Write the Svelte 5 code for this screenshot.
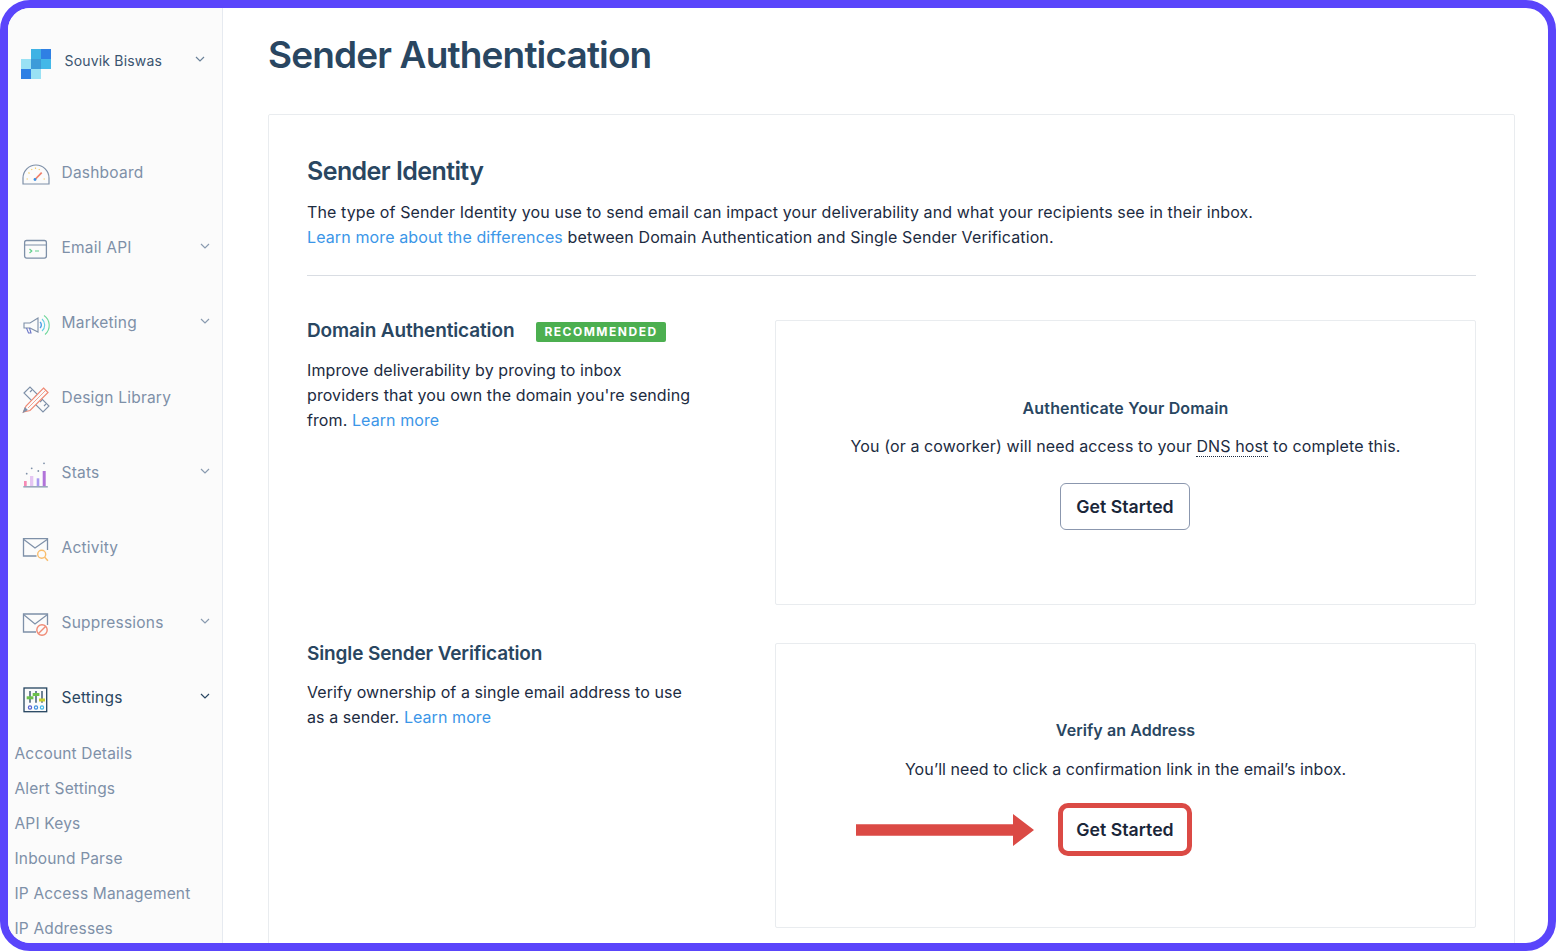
<script>
  const nav = [
    { id: 'dash', label: 'Dashboard' },
    { id: 'api', label: 'Email API', caret: true },
    { id: 'mkt', label: 'Marketing', caret: true },
    { id: 'lib', label: 'Design Library' },
    { id: 'stats', label: 'Stats', caret: true },
    { id: 'act', label: 'Activity' },
    { id: 'sup', label: 'Suppressions', caret: true },
    { id: 'set', label: 'Settings', caret: true, active: true }
  ];
  const subs = ['Account Details', 'Alert Settings', 'API Keys', 'Inbound Parse', 'IP Access Management', 'IP Addresses'];
</script>

<div class="frame">
  <aside class="sidebar">
    <div class="account">
      <svg class="logo" width="30" height="30" viewBox="0 0 30 30">
        <rect x="10" y="0" width="10" height="10" fill="#3fb2e4"/>
        <rect x="20" y="0" width="10" height="10" fill="#2f80e4"/>
        <rect x="0" y="10" width="10" height="10" fill="#99e1f4"/>
        <rect x="10" y="10" width="10" height="10" fill="#3d9bd9"/>
        <rect x="20" y="10" width="10" height="10" fill="#44b8e8"/>
        <rect x="0" y="20" width="10" height="10" fill="#2f80e4"/>
        <rect x="10" y="20" width="10" height="10" fill="#99e1f4"/>
      </svg>
      <span class="account-name">Souvik Biswas</span>
      <svg class="caret account-caret" width="10" height="6" viewBox="0 0 10 6"><path d="M1 1l4 4 4-4" fill="none" stroke="#6b8299" stroke-width="1.2"/></svg>
    </div>

    <nav class="nav">
      {#each nav as item}
        <div class="nav-item" class:active={item.active}>
          <svg class="nav-icon" width="28" height="28" viewBox="0 0 28 28" fill="none" stroke="#7e90a8" stroke-width="1.1">
            {#if item.id === 'dash'}
              <path d="M1 25v-6a13 13 0 0 1 26 0v6z" stroke-width="1.2"/>
              <path d="M13.500 20l6.200-6.300" stroke="#ef7f6a" stroke-width="1.700"/>
              <circle cx="13" cy="20.500" r="1.400" fill="#3f8fe0" stroke="none"/>
              <path d="M4.500 20h1.500M21.500 20H23M6.500 13.500l1 1M9.500 10l.5 1M13.500 8.500V10M17.500 10l-.5 1" stroke="#f5cf6c" stroke-width="1.200"/>
            {:else if item.id === 'api'}
              <rect x="2.600" y="6.500" width="21.800" height="17.600" rx="2" stroke-width="1.300"/>
              <path d="M2.600 11h21.800" stroke-width="1.200"/>
              <path d="M7.500 15l2.300 2-2.300 2" stroke="#62cf8c" stroke-width="1.200"/>
              <path d="M13 17h4" stroke="#62cf8c" stroke-width="1.200"/>
            {:else if item.id === 'mkt'}
              <g transform="translate(0 2)">
                <path d="M2 12h6l8-5v14l-8-4H2z"/>
                <path d="M4.500 17l2 5H9l-1.500-5" stroke="#6c76c8"/>
                <path d="M18 11a4 4 0 0 1 0 6" stroke="#4d9fe8" stroke-width="1.400"/>
                <path d="M20 8a8 8 0 0 1 0 12" stroke="#62cfe0"/>
                <path d="M22 4.500a12 12 0 0 1 1 19" stroke="#6fd79b"/>
              </g>
            {:else if item.id === 'lib'}
              <path d="M2 9l6-6 19 19-6 6z"/>
              <path d="M8 8l2-2M13 13l2-2M18 18l2-2M22 22l2-2"/>
              <path d="M21.500 4l4.500 4.500L8 26.500 1.500 28 4 22z" fill="#fbfbfb" stroke="#ef8a75" stroke-width="1.200"/>
              <path d="M23.800 6.200L6 24" stroke="#ef8a75" stroke-width=".8"/>
              <path d="M1.500 28L3 24l2 2z" fill="#7e90a8" stroke="#7e90a8"/>
            {:else if item.id === 'stats'}
              <rect x="1.300" y="27" width="24.500" height="1.600" fill="#9aa8bb" stroke="none"/>
              <rect x="2" y="22" width="2.700" height="5" fill="#f78ab5" stroke="none"/>
              <rect x="8" y="17" width="3.300" height="10" fill="#e5c5f2" stroke="none"/>
              <rect x="14.700" y="19.300" width="2.600" height="7.700" fill="#a99af0" stroke="none"/>
              <rect x="20.700" y="12" width="3" height="15" fill="#b173d9" stroke="none"/>
              <g fill="#7e90a8" stroke="none">
                <circle cx="4.700" cy="14.700" r=".9"/><circle cx="9.700" cy="9.300" r=".9"/><circle cx="16.300" cy="12" r=".9"/><circle cx="22" cy="4.300" r=".9"/>
              </g>
            {:else if item.id === 'act'}
              <path d="M14.500 22H1.500V4.700h24V16" stroke-width="1.300"/>
              <path d="M1.500 5.200L13 14 25.500 5.200" stroke-width="1.200"/>
              <circle cx="19.700" cy="20.300" r="4" stroke="#f9bd6c" stroke-width="1.400"/>
              <path d="M22.700 23.300l3.200 3.500" stroke="#f9bd6c" stroke-width="1.500"/>
            {:else if item.id === 'sup'}
              <path d="M14 23H1.500V5h24v11" stroke-width="1.300"/>
              <path d="M1.500 5.500L13 15 25.500 5.500" stroke-width="1.200"/>
              <circle cx="20" cy="21" r="5.200" fill="#fbfbfb" stroke="#ef8a75" stroke-width="1.400"/>
              <path d="M16.500 24.500l7-7" stroke="#ef8a75" stroke-width="1.400"/>
            {:else}
              <rect x="2" y="4" width="22.700" height="23.700" stroke="#24445f" stroke-width="1.300"/>
              <path d="M8 7v11.700M14 7v11.700M20 7v11.700" stroke="#24445f" stroke-width="1.300"/>
              <rect x="4.700" y="12.300" width="6.700" height="3" fill="#6cc04a" stroke="none"/>
              <rect x="10.700" y="9" width="6.700" height="3" fill="#6cc04a" stroke="none"/>
              <rect x="17" y="14.500" width="6" height="3" fill="#c5d12e" stroke="none"/>
              <circle cx="8" cy="23.500" r="1.600" stroke="#5560d0" stroke-width="1.200"/>
              <circle cx="14" cy="23.500" r="1.600" stroke="#3f8fe0" stroke-width="1.200"/>
              <circle cx="20" cy="23.500" r="1.600" stroke="#41b8e8" stroke-width="1.200"/>
            {/if}
          </svg>
          <span class="nav-label">{item.label}</span>
          {#if item.caret}
            <svg class="caret" width="10" height="6" viewBox="0 0 10 6"><path d="M1 1l4 4 4-4" fill="none" stroke={item.active ? '#294661' : '#8a9bb0'} stroke-width="1.2"/></svg>
          {/if}
        </div>
      {/each}
    </nav>

    <ul class="subs">
      {#each subs as s}<li>{s}</li>{/each}
    </ul>
  </aside>

  <main class="main">
    <h1>Sender Authentication</h1>
    <section class="card">
      <h2>Sender Identity</h2>
      <p class="intro">The type of Sender Identity you use to send email can impact your deliverability and what your recipients see in their inbox.<br><a href="#a">Learn more about the differences</a> between Domain Authentication and Single Sender Verification.</p>
      <hr />

      <div class="row">
        <div class="info">
          <h3>Domain Authentication <span class="badge">RECOMMENDED</span></h3>
          <p>Improve deliverability by proving to inbox providers that you own the domain you're sending from. <a href="#a">Learn more</a></p>
        </div>
        <div class="box">
          <h4>Authenticate Your Domain</h4>
          <p>You (or a coworker) will need access to your <span class="dotted">DNS host</span> to complete this.</p>
          <button class="btn">Get Started</button>
        </div>
      </div>

      <div class="row second">
        <div class="info narrow">
          <h3>Single Sender Verification</h3>
          <p>Verify ownership of a single email address to use as a sender. <a href="#a">Learn more</a></p>
        </div>
        <div class="box verify">
          <h4>Verify an Address</h4>
          <p>You’ll need to click a confirmation link in the email’s inbox.</p>
          <div class="callout">
            <svg class="arrow" width="178" height="32" viewBox="0 0 178 32"><path d="M0 10.200h157V0l21 16-21 16V21.800H0z" fill="#db4a45"/></svg>
            <button class="btn flagged">Get Started</button>
          </div>
        </div>
      </div>
    </section>
  </main>
</div>

<style>
  :global(body) { margin: 0; background: #fff; overflow: hidden; }
  .frame {
    box-sizing: border-box; width: 1556px; height: 951px;
    border: 8px solid #5a45fb; border-radius: 30px; overflow: hidden;
    display: flex; background: #fff;
    font-family: Inter, "Liberation Sans", sans-serif; color: #1c2b41;
  }
  .sidebar {
    box-sizing: border-box; width: 215px; flex: none; height: 100%;
    background: #fbfbfb; border-right: 1px solid #e6eaf0; overflow: hidden;
  }
  .account { display: flex; align-items: center; height: 30px; margin: 41px 0 0 13px; }
  .logo { flex: none; }
  .account-name { margin-left: 13.500px; font-size: 14px; color: #3a5470; letter-spacing: .18px; position: relative; top: -4px; }
  .account-caret { margin-left: 33px; position: relative; top: -5px; }
  .nav { margin-top: 56px; }
  .nav-item { display: flex; align-items: center; height: 75px; padding-left: 14px; position: relative; }
  .nav-icon { flex: none; overflow: visible; }
  .nav-label { margin-left: 11.500px; font-size: 15.500px; color: #7e90a8; letter-spacing: .22px; }
  .caret { flex: none; }
  .nav-item .caret { position: absolute; right: 12px; top: 33px; }
  .active .nav-label { color: #294661; }
  .subs { list-style: none; margin: 1px 0 0; padding: 0 0 0 6.500px; }
  .subs li { height: 35px; line-height: 35px; font-size: 15.500px; color: #7e90a8; letter-spacing: .17px; white-space: nowrap; }

  .main { flex: 1; min-width: 0; padding: 0 33px 0 45px; height: 100%; overflow: hidden; }
  h1 { margin: 25px 0 0; font-size: 37px; line-height: 44px; font-weight: 600; color: #294661; letter-spacing: -.85px; }
  .card { box-sizing: border-box; margin-top: 37px; border: 1px solid #e9ecef; border-radius: 2px; padding: 38px; height: 900px; }
  h2 { margin: 0; font-size: 25px; line-height: 36px; font-weight: 600; color: #294661; letter-spacing: -.58px; }
  .intro { margin: 11px 0 0; font-size: 16px; line-height: 25px; letter-spacing: .115px; }
  a { color: #3b96e8; text-decoration: none; }
  hr { border: 0; border-top: 1px solid #d9dde3; margin: 25px 0 44px; }
  .row { display: flex; }
  .second { margin-top: 38px; }
  .info { width: 468px; flex: none; }
  .info p { margin: 17px 0 0; width: 386px; font-size: 16px; line-height: 25px; letter-spacing: .09px; }
  .info.narrow p { margin-top: 16px; letter-spacing: .075px; }
  h3 { margin: 0; font-size: 19px; line-height: 21px; font-weight: 600; color: #294661; letter-spacing: -.13px; display: flex; align-items: center; }
  .badge {
    margin-left: 22px; background: #4caf50; color: #fff; border-radius: 2px;
    font-size: 12px; font-weight: 700; letter-spacing: 1.500px; line-height: 20px; height: 20px; padding: 0 8px; position: relative; top: 1px;
  }
  .box {
    box-sizing: border-box; flex: 1; height: 285px; border: 1px solid #e9ecef; border-radius: 2px;
    display: flex; flex-direction: column; align-items: center; padding-top: 76px; text-align: center;
  }
  h4 { margin: 0; font-size: 16px; line-height: 22px; font-weight: 600; color: #294661; letter-spacing: .15px; }
  .box p { margin: 15px 0 0; font-size: 16px; line-height: 25px; letter-spacing: .115px; }
  .verify { padding-top: 75px; }
  .verify h4 { letter-spacing: .08px; }
  .box.verify p { margin-top: 16px; letter-spacing: .05px; }
  .dotted { border-bottom: 1px dotted #1c2b41; }
  .btn {
    box-sizing: border-box; margin: 24px 1px 0 0; width: 130px; height: 47px; background: #fff;
    border: 1px solid #8b97ae; border-radius: 6px; font: 600 17.700px Inter, "Liberation Sans", sans-serif; color: #1a2639; padding: 0;
  }
  .callout { position: relative; margin: 21px 1px 0 0; }
  .callout .btn { margin: 0; display: block; }
  .flagged { width: 134px; height: 53px; border: 5px solid #db4a45; border-radius: 10px; }
  .arrow { position: absolute; right: 158px; top: 11px; }
</style>
